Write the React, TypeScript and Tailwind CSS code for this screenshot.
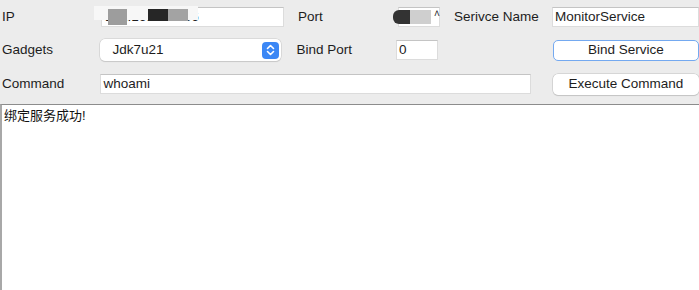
import React from "react";

const font = { fontFamily: '"Liberation Sans", "Noto Sans CJK SC", Arial, sans-serif' };

function Field({ className = "", children }: { className?: string; children?: React.ReactNode }) {
  return (
    <div
      className={`relative h-[20px] bg-white border border-[#dcdcdc] border-t-[#c4c4c4] flex items-center pl-[1px] text-[13.5px] text-[#1d1d1d] leading-none ${className}`}
    >
      {children}
    </div>
  );
}

function Label({ className = "", children }: { className?: string; children: React.ReactNode }) {
  return <div className={`text-[13.5px] text-[#1d1d1d] leading-none ${className}`}>{children}</div>;
}

function Stepper() {
  return (
    <div className="w-[17px] h-[17px] rounded-[4px] bg-[#3b87f5] flex items-center justify-center">
      <svg width="9" height="12" viewBox="0 0 9 12" fill="none">
        <path d="M1.5 4.5 L4.5 1.5 L7.5 4.5" stroke="white" strokeWidth="1.6" strokeLinecap="round" strokeLinejoin="round" />
        <path d="M1.5 7.5 L4.5 10.5 L7.5 7.5" stroke="white" strokeWidth="1.6" strokeLinecap="round" strokeLinejoin="round" />
      </svg>
    </div>
  );
}

export default function App() {
  return (
    <div className="w-[699px] h-[290px] bg-[#ececec] flex flex-col overflow-hidden" style={font}>
      <div className="pt-[7px] pl-[2px]">
        {/* row 1 */}
        <div className="flex items-center h-[20px]">
          <Label className="w-[99px]">IP</Label>
          <Field className="w-[183px]">
            <span className="pl-[2px]">192.168.20.156</span>
            <div className="absolute left-[-8px] top-[-2px] w-[104px] h-[14px] bg-[#f7f7f7]" />
            <div className="absolute left-[6px] top-[1px] w-[19px] h-[16px] bg-[#9d9d9d]" />
            <div className="absolute left-[46px] top-[1px] w-[20px] h-[12px] bg-[#262626]" />
            <div className="absolute left-[66px] top-[1px] w-[20px] h-[12px] bg-[#a3a3a3]" />
          </Field>
          <Label className="ml-[14px] w-[100px]">Port</Label>
          <Field className="w-[42px]">
            <div className="absolute left-[-6px] top-[2px] w-[17px] h-[14px] rounded-l-[6px] bg-[#333333]" />
            <div className="absolute left-[11px] top-[2px] w-[21px] h-[14px] bg-[#cfcfcf]" />
            <span className="absolute left-[35px] top-[1px] text-[10px]">˄</span>
          </Field>
          <Label className="ml-[14px] w-[98px]">Serivce Name</Label>
          <Field className="flex-1">
            <span className="pl-[1px]">MonitorService</span>
          </Field>
        </div>

        {/* row 2 */}
        <div className="flex items-center h-[22px] mt-[12px]">
          <Label className="w-[99px]">Gadgets</Label>
          <div className="w-[181px] h-[22px] bg-white rounded-[5px] shadow-[0_0_0_0.5px_#c8c8c8,0_1px_1px_rgba(0,0,0,0.15)] flex items-center justify-between pl-[12px] pr-[2px] text-[13.5px] text-[#1d1d1d]">
            <span>Jdk7u21</span>
            <Stepper />
          </div>
          <Label className="ml-[16px] w-[100px]">Bind Port</Label>
          <Field className="w-[42px]">
            <span className="pl-[1px]">0</span>
          </Field>
          <div className="ml-[115px] w-[147px] h-[21px] bg-white rounded-[5px] border-[1.5px] border-[#74a9f0] flex items-center justify-center text-[13.5px] text-[#1d1d1d]">
            Bind Service
          </div>
        </div>

        {/* row 3 */}
        <div className="flex items-center h-[20px] mt-[13px]">
          <Label className="w-[99px]">Command</Label>
          <Field className="w-[433px]">
            <span className="pl-[1px]">whoami</span>
          </Field>
          <div className="ml-[22px] w-[147px] h-[21px] bg-white rounded-[5px] shadow-[0_0_0_0.5px_#c0c0c0,0_1px_1px_rgba(0,0,0,0.15)] flex items-center justify-center text-[13.5px] text-[#1d1d1d]">
            Execute Command
          </div>
        </div>
      </div>

      {/* output area */}
      <div className="mt-[10px] flex-1 bg-white border-t border-l-2 border-t-[#8c8c8c] border-l-[#a8a8a8] pl-[2px] pt-[3px]">
        <div className="text-[13px] text-[#111] leading-[16px]">绑定服务成功!</div>
      </div>
    </div>
  );
}
